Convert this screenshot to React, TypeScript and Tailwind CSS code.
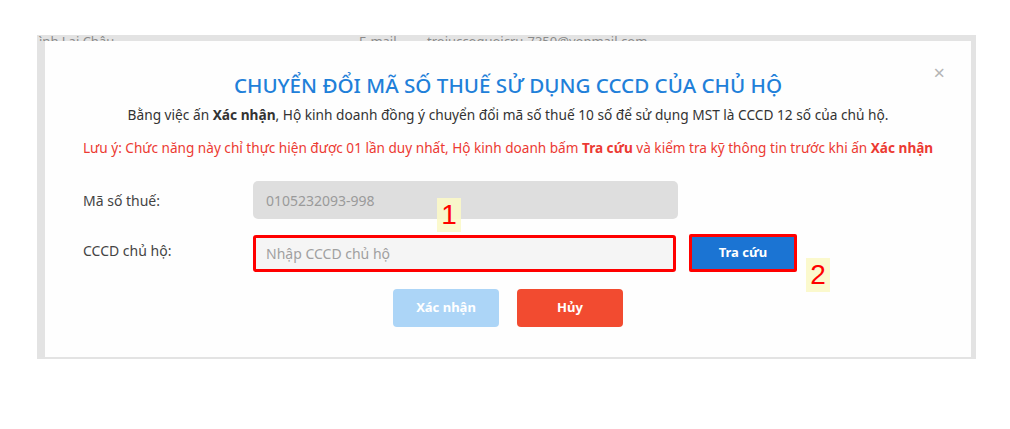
import React from 'react';

const font = { fontFamily: '"Noto Sans", "Open Sans", sans-serif' };

const Marker: React.FC<{ n: string; className: string }> = ({ n, className }) => (
  <div
    className={`absolute w-[24px] h-[34px] bg-[#fbf8c8]/90 flex items-center justify-center text-[28px] leading-none text-[#ff0000] ${className}`}
    style={{ fontFamily: '"Liberation Sans", Arial, sans-serif' }}
  >
    {n}
  </div>
);

export default function App() {
  return (
    <div className="w-[1010px] h-[429px] bg-white pt-[35px] pl-[37px]" style={font}>
      <div className="w-[939px] h-[324px] bg-[#e3e3e3] flex flex-col">
        {/* underlying page, mostly hidden behind the dialog */}
        <div className="h-[6px] overflow-hidden relative text-[13px] text-[#8a8a8a] leading-[18px]">
          <div className="flex items-start -mt-[3px]">
            <span className="w-[122px] pl-[2px]">ình Lai Châu</span>
            <span className="w-[200px]">⌄</span>
            <span className="w-[68px]">E-mail</span>
            <span>trojuccoquoicru-7350@yopmail.com</span>
          </div>
        </div>
        <div className="flex flex-1 pl-[8px] pr-[5px] pb-[2px]">
          <div className="relative w-[926px] h-[316px] bg-[#fefefe] flex flex-col">
            <button className="absolute right-[26px] top-[22px] text-[20px] leading-none text-[#b5b5b5]">×</button>

            <h2 className="mt-[30px] text-center text-[20.6px] leading-[28px] text-[#1f80d9] font-medium">
              CHUYỂN ĐỔI MÃ SỐ THUẾ SỬ DỤNG CCCD CỦA CHỦ HỘ
            </h2>

            <p className="mt-[6px] text-center text-[13.7px] leading-[20px] text-[#333]">
              Bằng việc ấn <b>Xác nhận</b>, Hộ kinh doanh đồng ý chuyển đổi mã số thuế 10 số để sử dụng MST là CCCD 12 số của chủ hộ.
            </p>

            <p className="mt-[13px] pl-[38px] text-[13.6px] leading-[20px] text-[#ec3a32]">
              Lưu ý: Chức năng này chỉ thực hiện được 01 lần duy nhất, Hộ kinh doanh bấm <b>Tra cứu</b> và kiểm tra kỹ thông tin trước khi ấn <b>Xác nhận</b>
            </p>

            <div className="mt-[23px] pl-[38px] flex items-center">
              <label className="w-[170px] text-[14px] text-[#444]">Mã số thuế:</label>
              <div className="w-[425px] h-[38px] rounded-[5px] bg-[#dedede] flex items-center px-[13px] text-[14px] text-[#9a9a9a]">
                0105232093-998
              </div>
            </div>

            <div className="mt-[15px] pl-[38px] flex items-center">
              <label className="w-[170px] text-[14px] text-[#444] self-start pt-[6px]">CCCD chủ hộ:</label>
              <div className="w-[423px] h-[37px] rounded-[3px] border-[3px] border-[#ff0000] bg-[#f5f5f5] flex items-center px-[10px] text-[14px] text-[#a0a0a0]">
                Nhập CCCD chủ hộ
              </div>
              <div className="ml-[13px] w-[108px] h-[38px] rounded-[2px] border-[3px] border-[#ff0000] bg-[#1b74d3] flex items-center justify-center text-[13px] font-bold text-white">
                Tra cứu
              </div>
            </div>

            <div className="mt-[17px] flex justify-center gap-[18px]">
              <button className="w-[106px] h-[38px] rounded-[4px] bg-[#acd5f7] text-[13px] font-bold text-white">
                Xác nhận
              </button>
              <button className="w-[106px] h-[38px] rounded-[4px] bg-[#f24b30] text-[13px] font-bold text-white">
                Hủy
              </button>
            </div>

            <Marker n="1" className="left-[392px] top-[157px]" />
            <Marker n="2" className="left-[761px] top-[217px]" />
          </div>
        </div>
      </div>
    </div>
  );
}
